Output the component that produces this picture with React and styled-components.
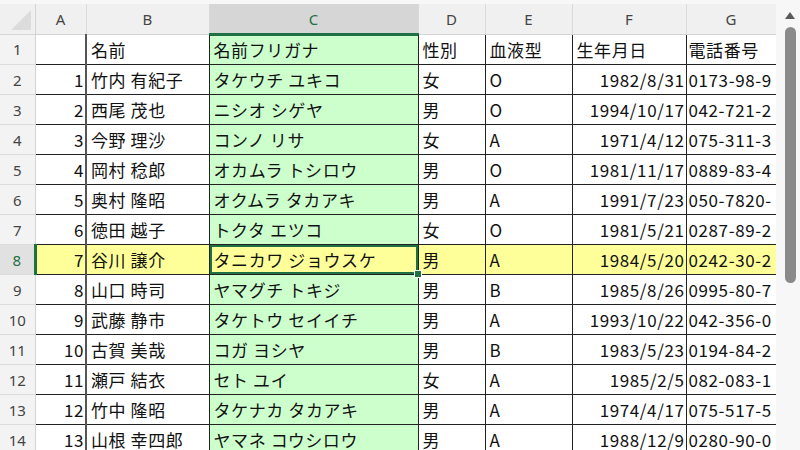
import React from "react";
import styled, { createGlobalStyle, css } from "styled-components";

const GlobalStyle = createGlobalStyle`
  html, body {
    margin: 0;
    padding: 0;
    background: #ffffff;
  }
  body {
    font-family: "Noto Sans CJK JP", "Noto Sans", sans-serif;
  }
`;

const GREEN = "#1e7145";

const Window = styled.div`
  display: flex;
  width: 800px;
  height: 450px;
  overflow: hidden;
  background: #f3f3f3;
`;

const Sheet = styled.div`
  width: 776px;
  height: 450px;
  overflow: hidden;
`;

const Grid = styled.table`
  table-layout: fixed;
  border-collapse: collapse;
  width: 776px;
`;

const ColHead = styled.th`
  height: 29px;
  padding: 0;
  background: ${(p) => (p.$active ? "#d6d6d6" : "#f0f0f0")};
  color: ${(p) => (p.$active ? GREEN : "#444")};
  font-family: "Noto Sans", "Open Sans", sans-serif;
  font-weight: 400;
  font-size: 15px;
  text-align: center;
  border-right: 1px solid #dadada;
  border-bottom: ${(p) => (p.$active ? `2px solid ${GREEN}` : "1px solid #d4d4d4")};
  border-top: 4px solid #f7f7f7;
`;

const Corner = styled.th`
  position: relative;
  padding: 0;
  background: #f0f0f0;
  border-right: 1px solid #d4d4d4;
  border-bottom: 1px solid #d4d4d4;
  border-top: 4px solid #f7f7f7;
  &::after {
    content: "";
    position: absolute;
    right: 4px;
    bottom: 4px;
    border-style: solid;
    border-width: 0 0 20px 20px;
    border-color: transparent transparent #dcdcdc transparent;
  }
`;

const RowHead = styled.th`
  height: 29px;
  padding: 0;
  background: ${(p) => (p.$active ? "#e1e1e1" : "#f3f3f3")};
  color: ${(p) => (p.$active ? GREEN : "#444")};
  font-family: "Noto Sans", "Open Sans", sans-serif;
  font-weight: 400;
  font-size: 15px;
  text-align: center;
  border-bottom: 1px solid #dcdcdc;
  border-right: ${(p) => (p.$active ? `3px solid ${GREEN}` : "1px solid #d4d4d4")};
`;

const Cell = styled.td`
  position: relative;
  height: 29px;
  padding: 0 4px;
  font-size: 17px;
  letter-spacing: 0.6px;
  color: #111;
  white-space: nowrap;
  overflow: hidden;
  text-align: ${(p) => (p.$num ? "right" : "left")};
  padding-right: ${(p) => (p.$num ? "1px" : "4px")};
  padding-left: ${(p) => (p.$phone ? "2px" : "4px")};
  background: ${(p) => (p.$hl ? "#ffff99" : p.$kana ? "#ccffcc" : "#ffffff")};
  border-right: ${(p) => (p.$thick ? "2px solid #555" : p.$phone ? "none" : "1px solid #222")};
  border-bottom: 1px solid #222;
  ${(p) =>
    p.$kana &&
    css`
      border-left: 1px solid #222;
    `}
  ${(p) =>
    p.$selected &&
    css`
      overflow: visible;
      box-shadow: inset 0 0 0 2px ${GREEN};
      &::after {
        content: "";
        position: absolute;
        right: -4px;
        bottom: -4px;
        width: 6px;
        height: 6px;
        background: ${GREEN};
        border: 1px solid #fff;
        z-index: 2;
      }
    `}
  ${(p) =>
    p.$colTop &&
    css`
      box-shadow: inset 0 1px 0 0 ${GREEN};
    `}
`;

const Scrollbar = styled.div`
  width: 24px;
  height: 450px;
  background: #f7f7f7;
  display: flex;
  flex-direction: column;
  align-items: center;
  padding-top: 12px;
  box-sizing: border-box;
`;

const Arrow = styled.div`
  width: 0;
  height: 0;
  border-left: 5px solid transparent;
  border-right: 5px solid transparent;
  border-bottom: 7px solid #5a5a5a;
  margin-left: 4px;
`;

const Thumb = styled.div`
  width: 11px;
  height: 256px;
  margin-top: 8px;
  margin-left: 4px;
  border-radius: 6px;
  background: #8a8a8a;
`;

const columns = [
  { key: "A", width: 51 },
  { key: "B", width: 123 },
  { key: "C", width: 209 },
  { key: "D", width: 67 },
  { key: "E", width: 87 },
  { key: "F", width: 114 },
  { key: "G", width: 90 },
];

const header = ["", "名前", "名前フリガナ", "性別", "血液型", "生年月日", "電話番号"];

const rows = [
  [1, "竹内 有紀子", "タケウチ ユキコ", "女", "O", "1982/8/31", "0173-98-9"],
  [2, "西尾 茂也", "ニシオ シゲヤ", "男", "O", "1994/10/17", "042-721-2"],
  [3, "今野 理沙", "コンノ リサ", "女", "A", "1971/4/12", "075-311-3"],
  [4, "岡村 稔郎", "オカムラ トシロウ", "男", "O", "1981/11/17", "0889-83-4"],
  [5, "奥村 隆昭", "オクムラ タカアキ", "男", "A", "1991/7/23", "050-7820-"],
  [6, "徳田 越子", "トクタ エツコ", "女", "O", "1981/5/21", "0287-89-2"],
  [7, "谷川 譲介", "タニカワ ジョウスケ", "男", "A", "1984/5/20", "0242-30-2"],
  [8, "山口 時司", "ヤマグチ トキジ", "男", "B", "1985/8/26", "0995-80-7"],
  [9, "武藤 静市", "タケトウ セイイチ", "男", "A", "1993/10/22", "042-356-0"],
  [10, "古賀 美哉", "コガ ヨシヤ", "男", "B", "1983/5/23", "0194-84-2"],
  [11, "瀬戸 結衣", "セト ユイ", "女", "A", "1985/2/5", "082-083-1"],
  [12, "竹中 隆昭", "タケナカ タカアキ", "男", "A", "1974/4/17", "075-517-5"],
  [13, "山根 幸四郎", "ヤマネ コウシロウ", "男", "A", "1988/12/9", "0280-90-0"],
];

const SELECTED_ROW = 8;

const App = () => {
  return (
    <Window>
      <GlobalStyle />
      <Sheet>
        <Grid>
          <colgroup>
            <col style={{ width: 35 }} />
            {columns.map((c) => (
              <col key={c.key} style={{ width: c.width }} />
            ))}
          </colgroup>
          <thead>
            <tr>
              <Corner />
              {columns.map((c) => (
                <ColHead key={c.key} $active={c.key === "C"}>
                  {c.key}
                </ColHead>
              ))}
            </tr>
          </thead>
          <tbody>
            <tr>
              <RowHead>1</RowHead>
              {header.map((h, i) => (
                <Cell
                  key={i}
                  $kana={i === 2}
                  $thick={i === 0}
                  $phone={i === 6}
                  $colTop={i === 2}
                >
                  {h}
                </Cell>
              ))}
            </tr>
            {rows.map((r, idx) => {
              const rowNo = idx + 2;
              const hl = rowNo === SELECTED_ROW;
              return (
                <tr key={rowNo}>
                  <RowHead $active={hl}>{rowNo}</RowHead>
                  {r.map((v, i) => (
                    <Cell
                      key={i}
                      $num={i === 0 || i === 5}
                      $kana={i === 2}
                      $thick={i === 0}
                      $phone={i === 6}
                      $hl={hl}
                      $selected={hl && i === 2}
                    >
                      {v}
                    </Cell>
                  ))}
                </tr>
              );
            })}
          </tbody>
        </Grid>
      </Sheet>
      <Scrollbar>
        <Arrow />
        <Thumb />
      </Scrollbar>
    </Window>
  );
};

export default App;
